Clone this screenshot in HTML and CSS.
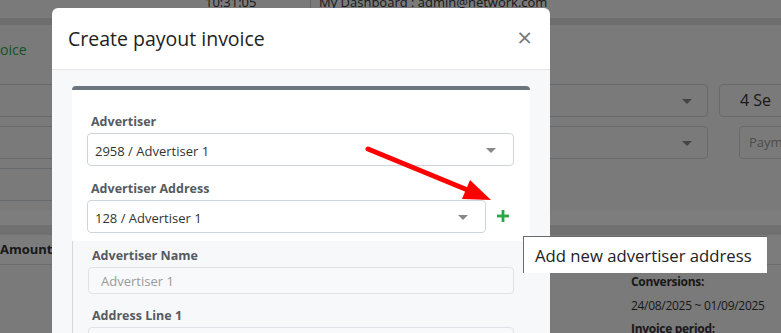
FILE: index.html
```html
<!DOCTYPE html>
<html lang="en">
<head>
    <meta charset="utf-8">
    <title>Create payout invoice</title>
    <link rel="stylesheet" href="styles.css">
</head>

<body>

    <!-- page behind the dialog -->
    <div class="page">
        <div class="topbar">
            <span class="clock">10:31:05</span>
            <span class="user">My Dashboard : admin@network.com</span>
        </div>
        <div class="topbar-edge"></div>

        <div class="page-title">
            <a href="#" class="green-link">oice</a>
        </div>

        <div class="filter-row">
            <div class="box box-left"></div>
            <div class="box box-select"><span class="caret"></span></div>
            <div class="box box-right first">4 Se</div>
        </div>
        <div class="filter-row">
            <div class="box box-left"></div>
            <div class="box box-select"><span class="caret"></span></div>
            <div class="box box-right second placeholder">Payme</div>
        </div>
        <div class="filter-row">
            <div class="box box-left"></div>
        </div>

        <div class="band-light"></div>
        <div class="band-dark"></div>
        <div class="table-head">
            <span class="th">Amount</span>
        </div>
        <div class="table-body">
            <div class="info">
                <b>Conversions:</b>
                <span>24/08/2025 ~ 01/09/2025</span>
                <b>Invoice period:</b>
            </div>
        </div>
    </div>

    <div class="backdrop"></div>

    <div class="modal-wrap">
        <div class="modal">
            <div class="modal-header">
                <h4 class="modal-title">Create payout invoice</h4>
                <span class="close">&times;</span>
            </div>
            <div class="modal-body">
                <div class="card">
                    <div class="form-item">
                        <label>Advertiser</label>
                        <div class="select">2958 / Advertiser 1<span class="caret"></span></div>
                    </div>
                    <div class="form-item">
                        <label>Advertiser Address</label>
                        <div class="select-row">
                            <div class="select">128 / Advertiser 1<span class="caret"></span></div>
                            <span class="add-btn">
                                <svg width="12" height="12" viewBox="0 0 12 12">
                                    <rect x="4.6" y="0" width="2.8" height="12" fill="#28a745"/>
                                    <rect x="0" y="4.6" width="12" height="2.8" fill="#28a745"/>
                                </svg>
                            </span>
                        </div>
                    </div>
                </div>
                <div class="card-lower">
                    <div class="form-item">
                        <label>Advertiser Name</label>
                        <input class="input" placeholder="Advertiser 1" disabled />
                    </div>
                    <div class="form-item">
                        <label>Address Line 1</label>
                        <input class="input" disabled />
                    </div>
                </div>
            </div>
        </div>
    </div>

    <svg class="arrow" width="781" height="333" viewBox="0 0 781 333">
        <line x1="368" y1="149" x2="470" y2="191" stroke="#ff0000" stroke-width="5" stroke-linecap="round"/>
        <polygon points="491,200 462,199 470,180" fill="#ff0000"/>
    </svg>

    <div class="tooltip">Add new advertiser address</div>

</body>
</html>
```

FILE: styles.css
```css
body {
    font-family: 'Open Sans', 'Noto Sans', sans-serif;
    background-color: #f5f5f5;
    color: #333;
    margin: 0;
    overflow: hidden;
}

/* ---------- page behind ---------- */

.page {
    height: 333px;
    overflow: hidden;
    font-size: 13px;
}

.topbar {
    height: 18px;
    line-height: 4px;
    background-color: #f4f4f4;
    display: flex;
    white-space: nowrap;
}

.clock {
    margin-left: 205px;
    width: 105px;
    height: 18px;
    border-right: 1px solid #c8c8c8;
}

.user {
    padding-left: 8px;
}

.topbar-edge {
    height: 7px;
    background-color: #dddddd;
}

.page-title {
    height: 59px;
    line-height: 50px;
}

.green-link {
    color: #28a745;
    text-decoration: none;
    font-size: 14px;
}

.filter-row {
    display: flex;
    height: 33px;
    margin-bottom: 9px;
    white-space: nowrap;
}

.box {
    flex-shrink: 0;
    height: 33px;
    box-sizing: border-box;
    border: 1px solid #ced4da;
    border-radius: 4px;
    background-color: #f5f5f5;
    position: relative;
}

.box-left {
    width: 420px;
    margin-left: -10px;
}

.box-select {
    width: 163px;
    margin-left: 135px;
}

.box-right {
    padding-left: 20px;
    line-height: 31px;
    width: 120px;
    font-size: 16px;
}

.box-right.first {
    margin-left: 11px;
}

.box-right.second {
    margin-left: 31px;
    padding-left: 9px;
    font-size: 13px;
}

.placeholder {
    color: #999;
}

.box .caret {
    right: 15px;
}

.band-light {
    height: 15px;
    background-color: #fafafa;
}

.band-dark {
    height: 10px;
    background-color: #e0e0e0;
}

.table-head {
    height: 29px;
    line-height: 29px;
    border-bottom: 1px solid #d8d8d8;
    background-color: #f8f8f8;
}

.th {
    font-weight: bold;
    font-size: 13px;
}

.table-body {
    padding-left: 631px;
    padding-top: 5px;
}

.info {
    display: flex;
    flex-direction: column;
    line-height: 23.5px;
    font-size: 12px;
    letter-spacing: -0.3px;
    white-space: nowrap;
}

.backdrop {
    position: fixed;
    top: 0;
    left: 0;
    right: 0;
    bottom: 0;
    background-color: rgba(0, 0, 0, 0.5);
}

/* ---------- dialog ---------- */

.modal-wrap {
    position: fixed;
    top: 0;
    left: 0;
    right: 0;
    bottom: 0;
    padding: 8px 0 0 52px;
}

.modal {
    width: 498px;
    height: 340px;
    background-color: #fff;
    border-radius: 6px 6px 0 0;
    overflow: hidden;
}

.modal-header {
    height: 62px;
    box-sizing: border-box;
    border-bottom: 1px solid #e5e5e5;
    padding: 0 18px 0 16px;
    display: flex;
    align-items: center;
    justify-content: space-between;
}

.modal-title {
    margin: 0;
    font-size: 19.5px;
    font-weight: normal;
    color: #222;
}

.close {
    font-size: 26px;
    color: #777;
    line-height: 1;
    margin-top: -3px;
}

.modal-body {
    background-color: #f7f8fa;
    padding: 16px 20px;
    height: 300px;
}

.card {
    background-color: #fff;
    border-top: 4px solid #6c757d;
    border-radius: 4px 4px 0 0;
    padding: 22px 16px 8px 15px;
}

.form-item {
    margin-bottom: 13px;
}

.form-item label {
    display: block;
    font-size: 12.5px;
    font-weight: bold;
    color: #555b61;
    margin: 0 0 2px 4px;
    padding-top: 1px;
    line-height: 18px;
}

.select {
    position: relative;
    height: 33px;
    box-sizing: border-box;
    border: 1px solid #ced4da;
    border-radius: 4px;
    padding: 3px 0 0 7px;
    line-height: 28px;
    font-size: 13px;
    color: #333;
}

.caret {
    position: absolute;
    right: 17px;
    top: 14px;
    width: 0;
    height: 0;
    border-left: 5px solid transparent;
    border-right: 5px solid transparent;
    border-top: 5px solid #888;
}

.select-row {
    display: flex;
    align-items: center;
}

.select-row .select {
    flex: 1;
}

.card .form-item:last-child {
    margin-bottom: 0;
}

.add-btn {
    flex-shrink: 0;
    width: 28px;
    box-sizing: border-box;
    display: flex;
    padding-left: 11px;
    margin-top: -2px;
}

.card-lower {
    border-left: 1px solid #d5d8dc;
    padding: 5px 16px 0 15px;
}

.card-lower .form-item {
    margin-bottom: 12px;
}

.input {
    display: block;
    width: 100%;
    height: 27px;
    box-sizing: border-box;
    border: 1px solid #dfe2e6;
    border-radius: 4px;
    background-color: #f8f9fa;
    padding-left: 12px;
    font-family: inherit;
    font-size: 13px;
}

.input::placeholder {
    color: #999;
}

/* ---------- overlays ---------- */

.arrow {
    position: fixed;
    top: 0;
    left: 0;
}

.tooltip {
    position: fixed;
    left: 523px;
    top: 236px;
    width: 244px;
    height: 37px;
    box-sizing: border-box;
    background-color: #fff;
    border-top: 1px solid #6a6a6a;
    border-left: 1px solid #6a6a6a;
    padding-left: 11px;
    line-height: 37px;
    font-size: 16.7px;
    color: #222;
    white-space: nowrap;
}
```
